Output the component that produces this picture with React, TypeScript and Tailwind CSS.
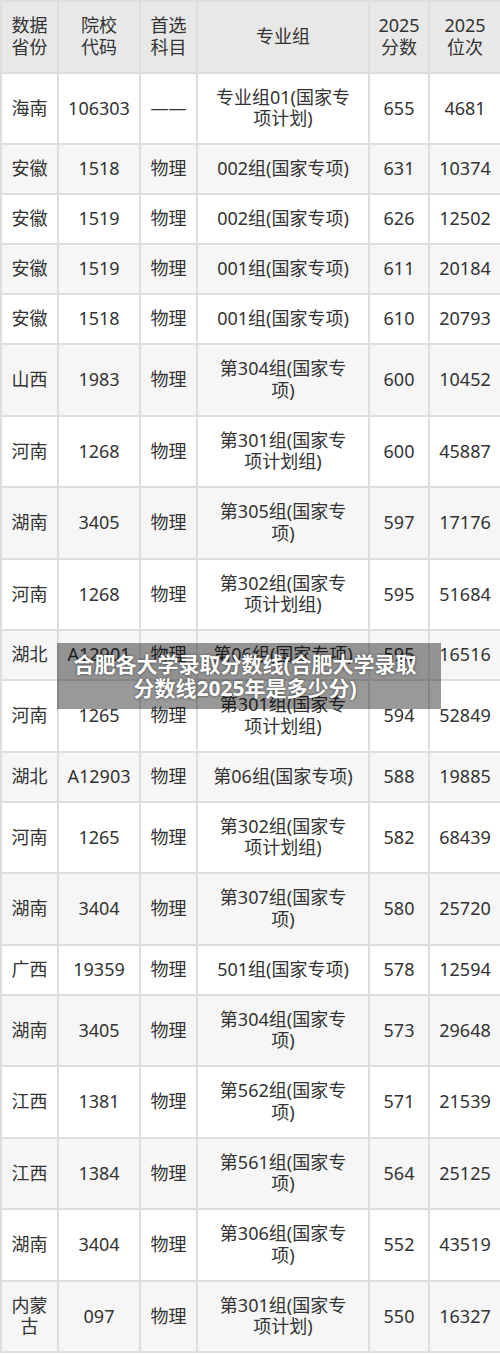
import React from "react";

type Row = [string, string, string, string, string, string];

const rows: Row[] = [
  ["海南", "106303", "——", "专业组01(国家专|项计划)", "655", "4681"],
  ["安徽", "1518", "物理", "002组(国家专项)", "631", "10374"],
  ["安徽", "1519", "物理", "002组(国家专项)", "626", "12502"],
  ["安徽", "1519", "物理", "001组(国家专项)", "611", "20184"],
  ["安徽", "1518", "物理", "001组(国家专项)", "610", "20793"],
  ["山西", "1983", "物理", "第304组(国家专|项)", "600", "10452"],
  ["河南", "1268", "物理", "第301组(国家专|项计划组)", "600", "45887"],
  ["湖南", "3405", "物理", "第305组(国家专|项)", "597", "17176"],
  ["河南", "1268", "物理", "第302组(国家专|项计划组)", "595", "51684"],
  ["湖北", "A12901", "物理", "第06组(国家专项)", "595", "16516"],
  ["河南", "1265", "物理", "第301组(国家专|项计划组)", "594", "52849"],
  ["湖北", "A12903", "物理", "第06组(国家专项)", "588", "19885"],
  ["河南", "1265", "物理", "第302组(国家专|项计划组)", "582", "68439"],
  ["湖南", "3404", "物理", "第307组(国家专|项)", "580", "25720"],
  ["广西", "19359", "物理", "501组(国家专项)", "578", "12594"],
  ["湖南", "3405", "物理", "第304组(国家专|项)", "573", "29648"],
  ["江西", "1381", "物理", "第562组(国家专|项)", "571", "21539"],
  ["江西", "1384", "物理", "第561组(国家专|项)", "564", "25125"],
  ["湖南", "3404", "物理", "第306组(国家专|项)", "552", "43519"],
  ["内蒙|古", "097", "物理", "第301组(国家专|项计划)", "550", "16327"],
];

const headers = ["数据|省份", "院校|代码", "首选|科目", "专业组", "2025|分数", "2025|位次"];

const cell =
  "border-2 border-[#dedede] text-center align-middle px-0 py-[13.25px] leading-[21.5px] whitespace-nowrap";

function Lines({ text }: { text: string }) {
  const parts = text.split("|");
  return (
    <>
      {parts.map((p, i) => (
        <div key={i}>{p}</div>
      ))}
    </>
  );
}

export default function App() {
  return (
    <div
      className="relative w-[500px] bg-white text-[#333333] text-[18px]"
      style={{ fontFamily: '"Noto Sans", "Noto Sans CJK SC", sans-serif' }}
    >
      <table className="w-[500px] table-fixed border-collapse">
        <colgroup>
          <col className="w-[57px]" />
          <col className="w-[82px]" />
          <col className="w-[57px]" />
          <col className="w-[172px]" />
          <col className="w-[60px]" />
          <col className="w-[72px]" />
        </colgroup>
        <thead>
          <tr className="bg-[#e8e8e8]">
            {headers.map((h, i) => (
              <th key={i} className={`${cell} font-normal`}>
                <Lines text={h} />
              </th>
            ))}
          </tr>
        </thead>
        <tbody>
          {rows.map((r, i) => (
            <tr key={i} className={i % 2 === 0 ? "bg-white" : "bg-[#f6f6f6]"}>
              {r.map((c, j) => (
                <td key={j} className={cell}>
                  <Lines text={c} />
                </td>
              ))}
            </tr>
          ))}
        </tbody>
      </table>
      <div className="absolute left-[57px] top-[643px] w-[384px] bg-[rgba(0,0,0,0.4)] pl-[12px] pr-[20px] py-[9px] text-center text-white font-bold text-[21px] leading-[24px] [text-shadow:0_0_3px_rgba(0,0,0,0.6)]">
        合肥各大学录取分数线(合肥大学录取分数线2025年是多少分)
      </div>
    </div>
  );
}
